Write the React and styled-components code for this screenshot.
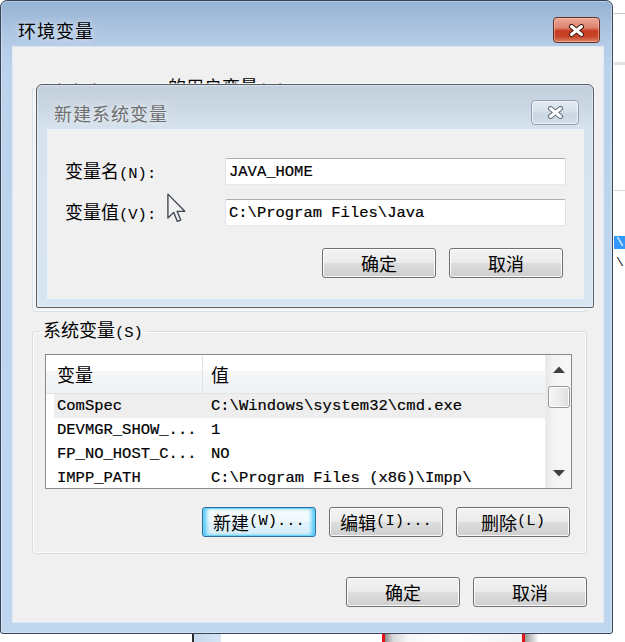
import React from 'react';
import styled, { createGlobalStyle, css } from 'styled-components';

const CJK = `"Noto Sans CJK SC", "Noto Sans", sans-serif`;
const MONO = `"Liberation Mono", "Noto Sans CJK SC", monospace`;

const GlobalStyle = createGlobalStyle`
  html, body { margin: 0; padding: 0; background: #ffffff; }
  body { font-family: ${CJK}; }
`;

const Desktop = styled.div`
  position: relative;
  width: 625px;
  height: 642px;
  overflow: hidden;
  background: #ffffff;
`;

/* ---------- windows behind ---------- */
const BackRight = styled.div`
  position: absolute;
  left: 560px;
  top: 0;
  width: 80px;
  height: 642px;
  z-index: 0;
  background: #ffffff;
  box-sizing: border-box;
  padding-left: 54px;
  display: flex;
  flex-direction: column;
`;

const BackLine = styled.div`
  flex: none;
  margin-top: ${(p) => p.$mt}px;
  height: ${(p) => p.$h}px;
  background: ${(p) => p.$c};
`;

const BackRow = styled.div`
  flex: none;
  margin-top: ${(p) => p.$mt}px;
  height: ${(p) => p.$h}px;
  line-height: ${(p) => p.$h}px;
  padding-left: 2px;
  font-family: ${MONO};
  font-size: 13px;
  color: ${(p) => (p.$sel ? '#ffffff' : '#111111')};
  background: ${(p) => (p.$sel ? '#3399ff' : 'transparent')};
`;

const BackBottom = styled.div`
  position: absolute;
  left: 192px;
  top: 600px;
  width: 433px;
  height: 42px;
  z-index: 0;
  box-sizing: border-box;
  border-left: 2px solid #2b2b2b;
  background: #ffffff;
  display: flex;
`;

const BackSide = styled.div`
  flex: none;
  width: 27px;
  background: linear-gradient(90deg, #c6d9ee, #d6e4f3);
`;

const BackFrame = styled.div`
  flex: none;
  margin-left: 161px;
  width: 143px;
  box-sizing: border-box;
  border-left: 3px solid #e4121a;
  border-right: 3px solid #e4121a;
  background: linear-gradient(90deg, #8c8c8c 0px, #d8d8d8 8px, #f8f8f8 24px, #ffffff 50%, #f3f3f3 100%);
`;

const BackShade = styled.div`
  flex: none;
  width: 14px;
  background: linear-gradient(90deg, #9a9a9a, #ffffff);
`;

/* ---------- main window ---------- */
const Window = styled.div`
  position: relative;
  z-index: 1;
  width: 613px;
  height: 634px;
  box-sizing: border-box;
  border: 1px solid #34455a;
  border-radius: 7px 7px 3px 3px;
  background: linear-gradient(180deg, #96b2d3 0px, #a6c0de 22px, #b5cce7 44px, #bcd3ec 70px, #bfd6ee 100%);
  box-shadow: inset 0 0 0 1px rgba(255, 255, 255, 0.35);
  display: flex;
  flex-direction: column;
`;

const TitleBar = styled.div`
  flex: none;
  height: ${(p) => p.$h}px;
  box-sizing: border-box;
  padding: ${(p) => p.$pad};
  display: flex;
  align-items: center;
  justify-content: space-between;
`;

const Title = styled.div`
  font-family: ${CJK};
  font-size: 18px;
  line-height: 1;
  letter-spacing: 1px;
  color: ${(p) => (p.$inactive ? '#6f6f6f' : '#000000')};
  text-shadow: 0 0 7px rgba(255, 255, 255, 0.85);
`;

const CloseButton = styled.div`
  width: ${(p) => p.$w}px;
  height: ${(p) => p.$h}px;
  box-sizing: border-box;
  border-radius: 4px;
  display: flex;
  align-items: center;
  justify-content: center;
  ${(p) =>
    p.$active
      ? css`
          border: 1px solid #6a2b22;
          background: linear-gradient(180deg, #eaa795 0%, #dd8570 40%, #c73b20 54%, #c8462b 78%, #dc8566 100%);
          box-shadow: inset 0 0 0 1px rgba(255, 215, 205, 0.45);
        `
      : css`
          border: 1px solid #8e9fb3;
          background: linear-gradient(180deg, #e3eaf2 0%, #d7e1eb 45%, #cad6e3 55%, #d4dee9 100%);
          box-shadow: inset 0 0 0 1px rgba(255, 255, 255, 0.6);
        `}
`;

const XGlyph = ({ outline }) => (
  <svg width="17" height="13" viewBox="0 0 17 13">
    <path d="M3.5 2.5 L13.5 10.5 M13.5 2.5 L3.5 10.5" stroke={outline} strokeWidth="5.2" strokeLinecap="round" fill="none" />
    <path d="M3.5 2.5 L13.5 10.5 M13.5 2.5 L3.5 10.5" stroke="#ffffff" strokeWidth="3" strokeLinecap="round" fill="none" />
  </svg>
);

const Client = styled.div`
  flex: 1;
  margin: 0 9px 11px 12px;
  background: #f0f0f0;
  box-shadow: 0 0 0 1px rgba(225, 235, 246, 0.9);
  padding: 30px 16px 0 19px;
  display: flex;
  flex-direction: column;
`;

const Group = styled.fieldset`
  margin: 0 0 ${(p) => p.$mb || 0}px 0;
  min-width: 0;
  box-sizing: border-box;
  height: ${(p) => (p.$h ? `${p.$h}px` : 'auto')};
  border: 1px solid #d5dfe5;
  border-radius: 3px;
  padding: 12px 14px 16px 12px;
  box-shadow: inset 0 0 0 1px rgba(255, 255, 255, 0.7);
`;

const Legend = styled.legend`
  margin-left: -5px;
  padding: 0 3px;
  font-family: ${CJK};
  font-size: 18px;
  line-height: 18px;
  color: #000000;
`;

const Acc = styled.span`
  font-family: ${MONO};
  font-size: 15.5px;
`;

/* ---------- list view ---------- */
const ListView = styled.div`
  height: 135px;
  box-sizing: border-box;
  border: 1px solid #858a91;
  background: #ffffff;
  display: grid;
  grid-template-columns: 1fr 26px;
  overflow: hidden;
`;

const ListMain = styled.div`
  min-width: 0;
  display: flex;
  flex-direction: column;
  overflow: hidden;
`;

const HeaderRow = styled.div`
  flex: none;
  height: 39px;
  box-sizing: border-box;
  display: grid;
  grid-template-columns: 157px 1fr;
  background: linear-gradient(180deg, #ffffff 0%, #ffffff 42%, #f6f7f8 43%, #f1f2f4 100%);
  border-bottom: 1px solid #e3e4e6;
`;

const HeaderCell = styled.div`
  display: flex;
  align-items: center;
  padding: 0 0 1px ${(p) => p.$pad}px;
  font-family: ${CJK};
  font-size: 18px;
  color: #000000;
  border-right: ${(p) => (p.$divider ? '1px solid #e0e2e5' : 'none')};
`;

const Rows = styled.div`
  display: flex;
  flex-direction: column;
`;

const Row = styled.div`
  flex: none;
  height: 24px;
  display: grid;
  grid-template-columns: 157px 1fr;
  align-items: center;
  font-family: ${MONO};
  font-size: 15.5px;
  line-height: 18px;
  color: #000000;
  -webkit-text-stroke: 0.2px #000000;
  white-space: nowrap;
  background: ${(p) => (p.$sel ? 'linear-gradient(90deg, transparent 8px, #eeeeee 8px)' : 'transparent')};
`;

const Cell = styled.div`
  padding-left: ${(p) => p.$pad}px;
  overflow: hidden;
  text-overflow: clip;
`;

const ScrollBar = styled.div`
  display: flex;
  flex-direction: column;
  align-items: center;
  background: linear-gradient(90deg, #e8e8e8 0%, #f3f3f3 30%, #f7f7f7 100%);
  border-left: 1px solid #ededed;
`;

const ScrollArrow = styled.div`
  flex: none;
  width: 100%;
  height: 29px;
  display: flex;
  align-items: center;
  justify-content: center;
`;

const Thumb = styled.div`
  flex: none;
  margin-top: 2px;
  width: 22px;
  height: 22px;
  box-sizing: border-box;
  border: 1px solid #979797;
  border-radius: 3px;
  background: linear-gradient(90deg, #f5f5f5 0%, #ececec 50%, #dedede 100%);
  box-shadow: inset 0 0 0 1px #ffffff;
`;

const Track = styled.div`
  flex: 1;
`;

const Tri = ({ up }) => (
  <svg width="12" height="7" viewBox="0 0 12 7">
    <polygon points={up ? '0,7 6,0.5 12,7' : '0,0 12,0 6,6.5'} fill="#404040" />
  </svg>
);

/* ---------- buttons ---------- */
const ButtonRow = styled.div`
  display: flex;
  justify-content: flex-end;
  gap: 13px;
  margin-top: ${(p) => p.$mt}px;
  padding-right: ${(p) => p.$pr || 0}px;
`;

const Button = styled.button`
  width: 114px;
  height: 30px;
  box-sizing: border-box;
  padding: 0;
  border: 1px solid #707070;
  border-radius: 3px;
  background: linear-gradient(180deg, #f3f3f3 0%, #ebebeb 50%, #dddddd 51%, #cfcfcf 100%);
  box-shadow: inset 0 0 0 1px rgba(255, 255, 255, 0.85);
  display: flex;
  align-items: center;
  justify-content: center;
  font-family: ${CJK};
  font-size: 18px;
  line-height: 1;
  color: #000000;
  ${(p) =>
    p.$default &&
    css`
      border-color: #2f6d9e;
      background: linear-gradient(180deg, #f7fcfe 0%, #eef8fd 50%, #e2f2fb 51%, #d6edf8 100%);
      box-shadow: inset 0 0 0 1px #6ad3f8, inset 4px 0 4px -1px #3cc3f4, inset -4px 0 4px -1px #3cc3f4;
    `}
`;

/* ---------- dialog ---------- */
const Dialog = styled.div`
  position: absolute;
  left: 36px;
  top: 84px;
  z-index: 2;
  width: 558px;
  height: 224px;
  box-sizing: border-box;
  border: 1px solid #585d63;
  border-radius: 6px 6px 2px 2px;
  background: linear-gradient(180deg, #c2cfdc 0px, #ccd8e4 25px, #d6e2ee 45px, #d8e5f2 100%);
  box-shadow: 0 0 0 1px rgba(255, 255, 255, 0.55), inset 0 0 0 1px rgba(255, 255, 255, 0.4);
  display: flex;
  flex-direction: column;
`;

const DialogClient = styled.div`
  flex: 1;
  margin: 0 10px 9px 11px;
  background: #f0f0f0;
  box-shadow: 0 0 0 1px rgba(236, 242, 248, 0.9);
  padding: 28px 17px 0 17px;
  display: flex;
  flex-direction: column;
`;

const FormGrid = styled.div`
  display: grid;
  grid-template-columns: 160px 1fr;
  row-gap: 14px;
  align-items: center;
`;

const FieldLabel = styled.label`
  font-family: ${CJK};
  font-size: 18px;
  line-height: 1;
  color: #000000;
`;

const TextBox = styled.div`
  height: 27px;
  box-sizing: border-box;
  border: 1px solid;
  border-color: #abadb3 #dbdfe6 #e3e9ef #e2e3ea;
  border-radius: 2px;
  background: #ffffff;
  padding-left: 3px;
  display: flex;
  align-items: center;
  font-family: ${MONO};
  font-size: 15.5px;
  color: #000000;
  -webkit-text-stroke: 0.2px #000000;
  white-space: nowrap;
`;

const Cursor = styled.svg`
  position: absolute;
  left: 130px;
  top: 108px;
`;

const systemVars = [
  ['ComSpec', 'C:\\Windows\\system32\\cmd.exe'],
  ['DEVMGR_SHOW_...', '1'],
  ['FP_NO_HOST_C...', 'NO'],
  ['IMPP_PATH', 'C:\\Program Files (x86)\\Impp\\'],
];

export default function App() {
  return (
    <>
      <GlobalStyle />
      <Desktop>
        <BackRight>
          <BackLine $mt={13} $h={1} $c="#c8c8c8" />
          <BackLine $mt={48} $h={3} $c="#e2e2e2" />
          <BackLine $mt={125} $h={1} $c="#d8d8d8" />
          <BackRow $mt={45} $h={13} $sel>\</BackRow>
          <BackRow $mt={6} $h={16}>\</BackRow>
        </BackRight>
        <BackBottom>
          <BackSide />
          <BackFrame />
          <BackShade />
        </BackBottom>

        <Window>
          <TitleBar $h={46} $pad="12px 12px 0 17px">
            <Title>环境变量</Title>
            <CloseButton $active $w={47} $h={26}>
              <XGlyph outline="#4a1d17" />
            </CloseButton>
          </TitleBar>
          <Client>
            <Group $h={235} $mb={8}>
              <Legend>
                <Acc>Administrator</Acc> 的用户变量<Acc>(U)</Acc>
              </Legend>
            </Group>
            <Group>
              <Legend>
                系统变量<Acc>(S)</Acc>
              </Legend>
              <ListView>
                <ListMain>
                  <HeaderRow>
                    <HeaderCell $pad={11} $divider>变量</HeaderCell>
                    <HeaderCell $pad={8}>值</HeaderCell>
                  </HeaderRow>
                  <Rows>
                    {systemVars.map(([name, value], i) => (
                      <Row key={name} $sel={i === 0}>
                        <Cell $pad={11}>{name}</Cell>
                        <Cell $pad={8}>{value}</Cell>
                      </Row>
                    ))}
                  </Rows>
                </ListMain>
                <ScrollBar>
                  <ScrollArrow>
                    <Tri up />
                  </ScrollArrow>
                  <Thumb />
                  <Track />
                  <ScrollArrow>
                    <Tri />
                  </ScrollArrow>
                </ScrollBar>
              </ListView>
              <ButtonRow $mt={18} $pr={2}>
                <Button $default>
                  新建<Acc>(W)...</Acc>
                </Button>
                <Button>
                  编辑<Acc>(I)...</Acc>
                </Button>
                <Button>
                  删除<Acc>(L)</Acc>
                </Button>
              </ButtonRow>
            </Group>
            <ButtonRow $mt={23}>
              <Button>确定</Button>
              <Button>取消</Button>
            </ButtonRow>
          </Client>
        </Window>

        <Dialog>
          <TitleBar $h={45} $pad="10px 14px 0 17px">
            <Title $inactive>新建系统变量</Title>
            <CloseButton $w={48} $h={25}>
              <XGlyph outline="#66717e" />
            </CloseButton>
          </TitleBar>
          <DialogClient>
            <FormGrid>
              <FieldLabel>
                变量名<Acc>(N):</Acc>
              </FieldLabel>
              <TextBox>JAVA_HOME</TextBox>
              <FieldLabel>
                变量值<Acc>(V):</Acc>
              </FieldLabel>
              <TextBox>C:\Program Files\Java</TextBox>
            </FormGrid>
            <ButtonRow $mt={22} $pr={3}>
              <Button>确定</Button>
              <Button>取消</Button>
            </ButtonRow>
          </DialogClient>
          <Cursor width="19" height="30" viewBox="0 0 12.6 19.6">
            <path
              d="M0.6 0.6 L0.6 16.4 L4.4 12.7 L6.9 18.7 L9.1 17.8 L6.7 12 L11.8 12 Z"
              fill="#f3f3f3"
              stroke="#3d4652"
              strokeWidth="0.9"
              strokeLinejoin="round"
            />
          </Cursor>
        </Dialog>
      </Desktop>
    </>
  );
}
